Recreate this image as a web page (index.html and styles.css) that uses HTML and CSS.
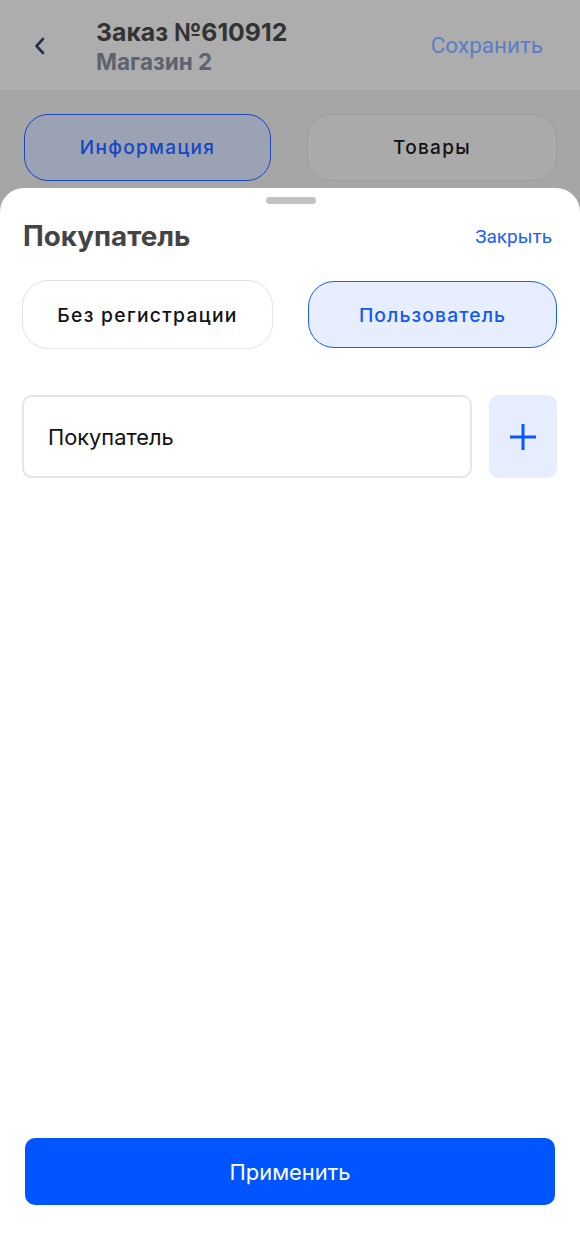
FILE: index.html
```html
<!DOCTYPE html>
<html lang="ru">
<head>
<meta charset="utf-8">
<title>Заказ №610912</title>
<link rel="stylesheet" href="styles.css">
</head>
<body>
<div class="screen">
  <header class="topbar">
    <div class="back">
      <svg width="14" height="18" viewBox="0 0 14 18"><path d="M10 2 L3.5 9 L10 16" fill="none" stroke="#25314a" stroke-width="2.6" stroke-linecap="round" stroke-linejoin="round"/></svg>
    </div>
    <div class="titles">
      <div class="title">Заказ №610912</div>
      <div class="subtitle">Магазин 2</div>
    </div>
    <div class="save">Сохранить</div>
  </header>
  <div class="tabs">
    <div class="tab tab-active">Информация</div>
    <div class="tab">Товары</div>
  </div>

  <section class="sheet">
    <div class="handle"></div>
    <div class="sheet-head">
      <div class="sheet-title">Покупатель</div>
      <div class="close">Закрыть</div>
    </div>
    <div class="toggle">
      <div class="opt">Без регистрации</div>
      <div class="opt opt-active">Пользователь</div>
    </div>
    <div class="field-row">
      <div class="field">Покупатель</div>
      <div class="add">
        <svg width="26" height="26" viewBox="0 0 26 26"><path d="M13 0 V26 M0 13 H26" stroke="#0a57ff" stroke-width="3"/></svg>
      </div>
    </div>
    <div class="spacer"></div>
    <div class="apply">Применить</div>
  </section>
</div>
</body>
</html>
```

FILE: styles.css
```css
* { box-sizing: border-box; }
html, body { margin: 0; padding: 0; }
body {
  width: 580px;
  height: 1254px;
  overflow: hidden;
  font-family: Inter, "Liberation Sans", sans-serif;
  background: #a6a6a6;
}
.screen {
  position: relative;
  width: 580px;
  height: 1254px;
}
.topbar {
  height: 90px;
  background: #adadad;
  display: flex;
  align-items: center;
  padding: 0 37px 0 33px;
}
.back {
  width: 63px;
  display: flex;
  align-items: center;
  height: 20px;
  margin-top: 2px;
}
.titles {
  flex: 1;
  display: flex;
  flex-direction: column;
  margin-top: 2px;
}
.title {
  font-size: 24.8px;
  font-weight: 700;
  color: #333333;
  line-height: 28px;
}
.subtitle {
  font-size: 22.5px;
  font-weight: 700;
  color: #5d6370;
  line-height: 26px;
  margin-top: 3px;
}
.save {
  font-family: Roboto, sans-serif;
  font-size: 22.5px;
  color: #5a7ec6;
}
.tabs {
  display: grid;
  grid-template-columns: 247px 250px;
  column-gap: 36px;
  padding: 24px 0 0 24px;
}
.tab {
  height: 67px;
  border-radius: 24px;
  border: 1.5px solid #9d9d9d;
  background: #aaaaaa;
  display: flex;
  align-items: center;
  justify-content: center;
  font-size: 19px;
  font-weight: 500;
  letter-spacing: 1.3px;
  color: #111111;
}
.tab-active {
  background: #9aa2b4;
  border-color: #1a47be;
  color: #1647c4;
}
.sheet {
  position: absolute;
  left: 0;
  right: 0;
  top: 188px;
  bottom: 0;
  background: #ffffff;
  border-radius: 24px 24px 0 0;
  display: flex;
  flex-direction: column;
  padding: 9px 23px 49px 22px;
}
.handle {
  align-self: center;
  width: 50px;
  height: 7px;
  border-radius: 4px;
  background: #c2c2c2;
  margin-left: 3px;
}
.sheet-head {
  display: flex;
  justify-content: space-between;
  align-items: center;
  margin-top: 16px;
  padding-left: 1px;
}
.sheet-title {
  font-size: 27.8px;
  font-weight: 700;
  color: #444444;
  line-height: 32px;
}
.close {
  font-family: Roboto, sans-serif;
  font-size: 19px;
  color: #1a5cff;
  margin-right: 5px;
}
.toggle {
  display: grid;
  grid-template-columns: 251px 249px;
  column-gap: 35px;
  margin-top: 28px;
}
.opt {
  height: 69px;
  border-radius: 26px;
  border: 1.5px solid #e3e3e8;
  background: #ffffff;
  display: flex;
  align-items: center;
  justify-content: center;
  font-size: 19.3px;
  font-weight: 500;
  letter-spacing: 1.3px;
  color: #111111;
}
.opt-active {
  height: 67px;
  margin-top: 1px;
  background: #e6eeff;
  border-color: #1a5cff;
  color: #1258f5;
  letter-spacing: 1.1px;
}
.field-row {
  display: flex;
  gap: 17px;
  margin-top: 46px;
}
.field {
  width: 451px;
  height: 83px;
  border: 2.5px solid #e4e4ea;
  border-radius: 10px;
  display: flex;
  align-items: center;
  padding-left: 24px;
  font-size: 21.8px;
  color: #111111;
}
.add {
  width: 68px;
  height: 83px;
  border-radius: 10px;
  background: #e6edff;
  display: flex;
  align-items: center;
  justify-content: center;
}
.spacer { flex: 1; }
.apply {
  margin-left: 3px;
  margin-right: 2px;
  height: 67px;
  border-radius: 10px;
  background: #0055ff;
  color: #ffffff;
  font-size: 21.9px;
  display: flex;
  align-items: center;
  justify-content: center;
}
```
